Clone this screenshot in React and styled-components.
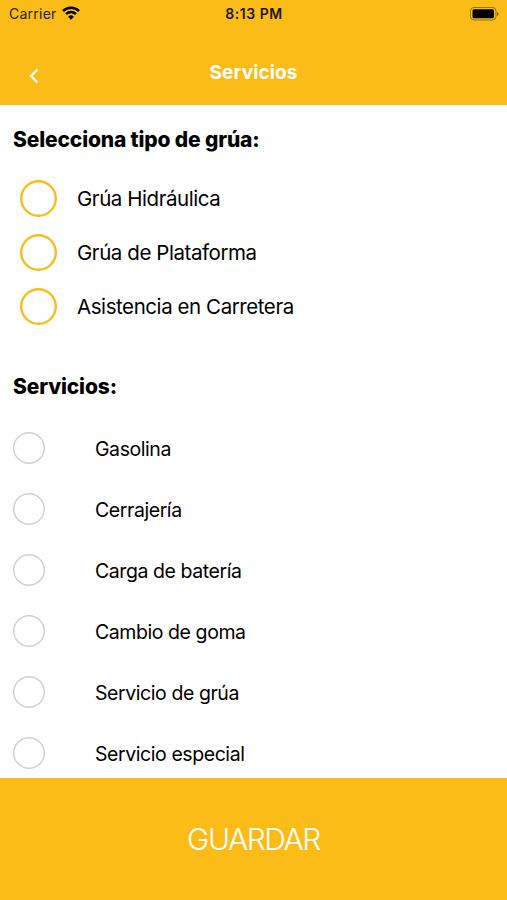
import React from 'react';
import styled, { createGlobalStyle, ThemeProvider } from 'styled-components';

const theme = {
  primary: '#fcbc18',
  white: '#ffffff',
  black: '#000000',
  grey: '#d0d0d0',
};

const GlobalStyle = createGlobalStyle`
  * {
    box-sizing: border-box;
  }
  body {
    margin: 0;
    font-family: Inter, 'Liberation Sans', sans-serif;
  }
`;

const Screen = styled.div`
  height: 900px;
  display: flex;
  flex-direction: column;
  overflow: hidden;
  background: ${({ theme }) => theme.white};
  color: ${({ theme }) => theme.black};
`;

const Header = styled.header`
  flex: none;
  height: 105px;
  background: ${({ theme }) => theme.primary};
`;

const StatusBar = styled.div`
  display: grid;
  grid-template-columns: 1fr auto 1fr;
  align-items: center;
  height: 27px;
  padding: 0 8px 0 9px;
  font-size: 14px;
`;

const Carrier = styled.div`
  display: flex;
  align-items: center;
  gap: 5px;
  color: #2a2105;
  letter-spacing: 0.25px;
`;

const Time = styled.span`
  font-weight: 600;
  letter-spacing: 0.55px;
  color: #1c1603;
`;

const BatteryIcon = styled.svg`
  justify-self: end;
`;

const NavBar = styled.nav`
  display: grid;
  grid-template-columns: 1fr auto 1fr;
  align-items: center;
  height: 78px;
  padding: 13px 28px 0;
  color: ${({ theme }) => theme.white};
`;

const BackIcon = styled.svg`
  margin-top: 6px;
`;

const NavTitle = styled.h1`
  margin: 0;
  font-size: 19px;
  font-weight: 700;
  letter-spacing: 0.1px;
`;

const Content = styled.main`
  flex: 1;
  min-height: 0;
  overflow: hidden;
`;

const SectionTitle = styled.h2`
  margin: 0;
  padding: ${({ $top }) => $top}px 0 0 13px;
  font-size: 21px;
  line-height: 26px;
  font-weight: 800;
  letter-spacing: -0.15px;
`;

const List = styled.div`
  padding-top: ${({ $top }) => $top}px;
`;

const Option = styled.div`
  display: flex;
  align-items: center;
  gap: ${({ $large }) => ($large ? 20 : 50)}px;
  height: ${({ $large }) => ($large ? 54 : 61)}px;
  padding-left: ${({ $large }) => ($large ? 20 : 13)}px;
`;

const Circle = styled.span`
  flex: none;
  width: ${({ $large }) => ($large ? 37 : 32)}px;
  height: ${({ $large }) => ($large ? 37 : 32)}px;
  margin-bottom: ${({ $large }) => ($large ? 1 : 2)}px;
  box-shadow: inset 0 0 0
    ${({ $large, theme }) => ($large ? `2.4px ${theme.primary}` : `1.4px ${theme.grey}`)};
  border-radius: 50%;
`;

const Label = styled.span`
  padding: ${({ $large }) => ($large ? '0 0 2px' : '1px 0 0')};
  font-size: ${({ $large }) => ($large ? 20.5 : 19.5)}px;
  letter-spacing: ${({ $large }) => ($large ? -0.43 : -0.43)}px;
`;

const SaveButton = styled.button`
  flex: none;
  height: 122px;
  padding: 0;
  border: 0;
  background: ${({ theme }) => theme.primary};
  color: ${({ theme }) => theme.white};
  font-family: inherit;
  font-size: 30px;
  font-weight: 275;
  letter-spacing: -1.45px;
`;

const towTypes = ['Grúa Hidráulica', 'Grúa de Plataforma', 'Asistencia en Carretera'];

const services = [
  'Gasolina',
  'Cerrajería',
  'Carga de batería',
  'Cambio de goma',
  'Servicio de grúa',
  'Servicio especial',
];

const App = () => {
  return (
    <ThemeProvider theme={theme}>
      <GlobalStyle />
      <Screen>
        <Header>
          <StatusBar>
            <Carrier>
              Carrier
              <svg width='18' height='15' viewBox='0 0 18 15' fill='none' stroke='#000' strokeWidth='2.5'>
                <path d='M1 5a11.3 11.3 0 0 1 16 0' />
                <path d='M4 8.2a7 7 0 0 1 10 0' />
                <path d='M9 13.7 6.1 10.7a4.1 4.1 0 0 1 5.8 0Z' fill='#000' stroke='none' />
              </svg>
            </Carrier>
            <Time>8:13 PM</Time>
            <BatteryIcon width='30' height='14' viewBox='0 0 30 14'>
              <rect x='1.5' y='0.5' width='25.5' height='12.5' rx='3.5' fill='none' stroke='#000' strokeOpacity='0.4' />
              <rect x='3.5' y='2.3' width='21.5' height='9' rx='1.5' />
              <path d='M28 5c2 .8 2 3.2 0 4Z' fillOpacity='0.5' />
            </BatteryIcon>
          </StatusBar>
          <NavBar>
            <BackIcon width='12' height='16' viewBox='0 0 12 16' fill='none' stroke='#fff' strokeWidth='2.3'>
              <path d='M9.5 1.5 3 8l6.5 6.5' />
            </BackIcon>
            <NavTitle>Servicios</NavTitle>
          </NavBar>
        </Header>
        <Content>
          <SectionTitle $top={22}>Selecciona tipo de grúa:</SectionTitle>
          <List $top={19}>
            {towTypes.map((name) => (
              <Option key={name} $large>
                <Circle $large />
                <Label $large>{name}</Label>
              </Option>
            ))}
          </List>
          <SectionTitle $top={40}>Servicios:</SectionTitle>
          <List $top={18}>
            {services.map((name) => (
              <Option key={name}>
                <Circle />
                <Label>{name}</Label>
              </Option>
            ))}
          </List>
        </Content>
        <SaveButton type='button'>GUARDAR</SaveButton>
      </Screen>
    </ThemeProvider>
  );
};

export default App;
